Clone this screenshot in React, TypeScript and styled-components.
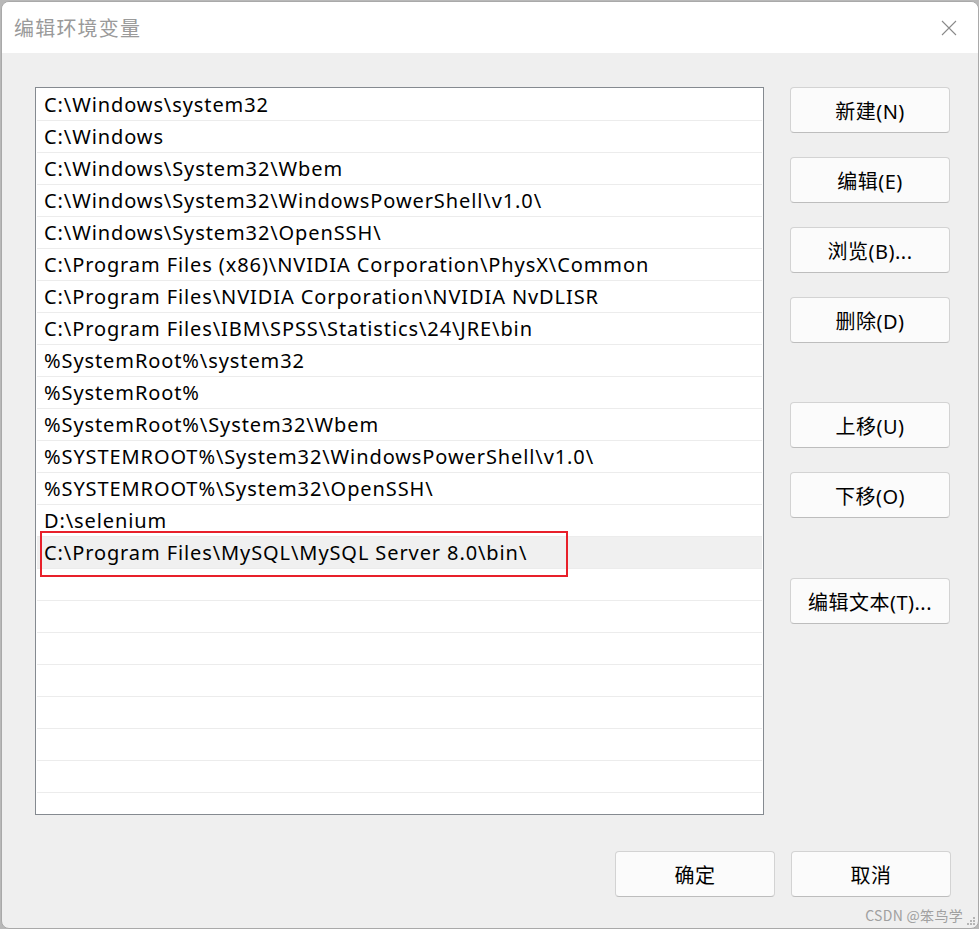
import React from 'react'
import styled, { createGlobalStyle } from 'styled-components'

const GlobalStyle = createGlobalStyle`
  html, body {
    margin: 0;
    padding: 0;
    background: #b8b8b8;
  }
  body {
    font-family: "Segoe UI", "Noto Sans", "Noto Sans CJK SC", sans-serif;
  }
`

const Window = styled.div`
  width: 976px;
  height: 926px;
  margin: 1px 0 0 1px;
  border: 1px solid #a9a9a9;
  border-radius: 8px;
  overflow: hidden;
  background: #efefef;
  display: flex;
  flex-direction: column;
  position: relative;
`

const TitleBar = styled.div`
  height: 51px;
  background: #ffffff;
  display: flex;
  align-items: center;
  justify-content: space-between;
  padding: 0 21px 0 12px;
  flex-shrink: 0;
`

const Title = styled.div`
  font-family: "Noto Sans CJK SC", sans-serif;
  font-size: 20px;
  color: #9a9a9a;
  letter-spacing: 1.2px;
`

const CloseIcon = styled.svg`
  width: 16px;
  height: 16px;
`

const Body = styled.div`
  flex: 1;
  display: flex;
  flex-direction: column;
  padding: 34px 27px 30px 33px;
`

const Main = styled.div`
  display: flex;
  gap: 26px;
`

const ListBox = styled.div`
  width: 725px;
  height: 724px;
  border: 1px solid #858a90;
  background: #ffffff;
  padding: 1px;
  box-sizing: content-box;
  overflow: hidden;
`

const Row = styled.div<{ $selected?: boolean }>`
  position: relative;
  height: 31px;
  border-bottom: 1px solid #ececec;
  background: ${p => (p.$selected ? '#f0f0f0' : '#ffffff')};
  display: flex;
  align-items: center;
  padding-left: 7px;
  font-size: 20px;
  line-height: 1;
  letter-spacing: 0.9px;
  color: #000;
  white-space: nowrap;
`

const Highlight = styled.div`
  position: absolute;
  z-index: 2;
  left: 3px;
  top: -6px;
  width: 524px;
  height: 42px;
  border: 2px solid #e8202a;
  pointer-events: none;
`

const Side = styled.div`
  display: flex;
  flex-direction: column;
`

const Button = styled.button<{ $gap?: number }>`
  width: 160px;
  height: 46px;
  margin-top: ${p => p.$gap ?? 0}px;
  background: #fbfbfb;
  border: 1px solid #d3d3d3;
  border-bottom-color: #bdbdbd;
  border-radius: 4px;
  font-family: "Segoe UI", "Noto Sans", "Noto Sans CJK SC", sans-serif;
  font-size: 20px;
  letter-spacing: 0.5px;
  color: #000;
  padding: 0;
  cursor: default;
`

const Footer = styled.div`
  margin-top: 36px;
  display: flex;
  justify-content: flex-end;
  gap: 16px;
`

const Watermark = styled.div`
  position: absolute;
  right: 15px;
  bottom: 3px;
  font-family: "Noto Sans CJK SC", sans-serif;
  font-size: 14px;
  letter-spacing: 0.3px;
  color: #a0a0a0;
`

const Grip = styled.svg`
  position: absolute;
  right: 2px;
  bottom: 2px;
  width: 10px;
  height: 10px;
`

const paths = [
  'C:\\Windows\\system32',
  'C:\\Windows',
  'C:\\Windows\\System32\\Wbem',
  'C:\\Windows\\System32\\WindowsPowerShell\\v1.0\\',
  'C:\\Windows\\System32\\OpenSSH\\',
  'C:\\Program Files (x86)\\NVIDIA Corporation\\PhysX\\Common',
  'C:\\Program Files\\NVIDIA Corporation\\NVIDIA NvDLISR',
  'C:\\Program Files\\IBM\\SPSS\\Statistics\\24\\JRE\\bin',
  '%SystemRoot%\\system32',
  '%SystemRoot%',
  '%SystemRoot%\\System32\\Wbem',
  '%SYSTEMROOT%\\System32\\WindowsPowerShell\\v1.0\\',
  '%SYSTEMROOT%\\System32\\OpenSSH\\',
  'D:\\selenium',
  'C:\\Program Files\\MySQL\\MySQL Server 8.0\\bin\\',
]

const TOTAL_ROWS = 23
const SELECTED = 14

export default function App() {
  const rows = Array.from({ length: TOTAL_ROWS }, (_, i) => paths[i] ?? '')
  return (
    <>
      <GlobalStyle />
      <Window>
        <TitleBar>
          <Title>编辑环境变量</Title>
          <CloseIcon viewBox="0 0 16 16">
            <path d="M1 1 L15 15 M15 1 L1 15" stroke="#8a8a8a" strokeWidth="1.1" fill="none" />
          </CloseIcon>
        </TitleBar>
        <Body>
          <Main>
            <ListBox>
              {rows.map((p, i) => (
                <Row key={i} $selected={i === SELECTED}>
                  {p}
                  {i === SELECTED && <Highlight />}
                </Row>
              ))}
            </ListBox>
            <Side>
              <Button>新建(N)</Button>
              <Button $gap={24}>编辑(E)</Button>
              <Button $gap={24}>浏览(B)...</Button>
              <Button $gap={24}>删除(D)</Button>
              <Button $gap={59}>上移(U)</Button>
              <Button $gap={24}>下移(O)</Button>
              <Button $gap={60}>编辑文本(T)...</Button>
            </Side>
          </Main>
          <Footer>
            <Button>确定</Button>
            <Button>取消</Button>
          </Footer>
        </Body>
        <Watermark>CSDN @笨鸟学</Watermark>
        <Grip viewBox="0 0 10 10">
          <rect x="7" y="1" width="2" height="2" fill="#b5b5b5" />
          <rect x="4" y="4" width="2" height="2" fill="#b5b5b5" />
          <rect x="7" y="4" width="2" height="2" fill="#b5b5b5" />
          <rect x="1" y="7" width="2" height="2" fill="#b5b5b5" />
          <rect x="4" y="7" width="2" height="2" fill="#b5b5b5" />
          <rect x="7" y="7" width="2" height="2" fill="#b5b5b5" />
        </Grip>
      </Window>
    </>
  )
}
